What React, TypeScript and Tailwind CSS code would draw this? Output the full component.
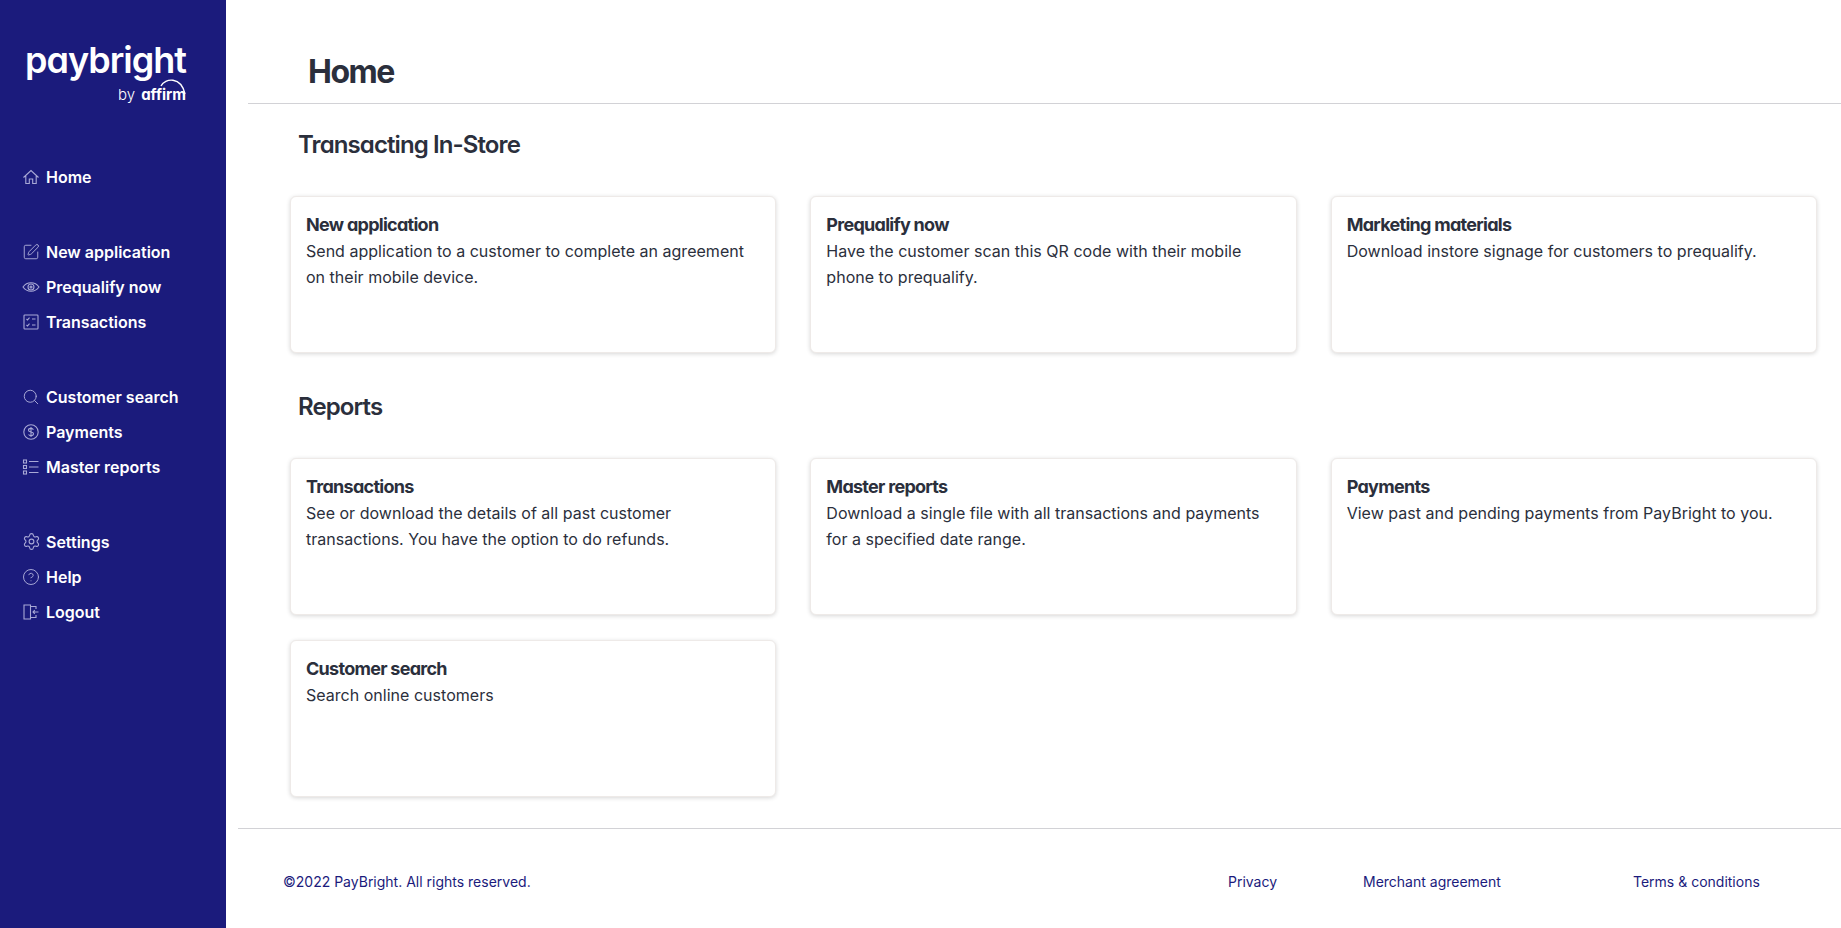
import { CircleHelp, Search, Settings, SquarePen } from "lucide-react";
import type { ReactNode } from "react";

const HomeIcon = () => (
  <svg width="18" height="18" viewBox="0 0 18 18" fill="none" stroke="currentColor" strokeWidth="1.1">
    <path d="M1.500 9.500L9 2.500l7.500 7M3.800 8v7.500h3.500v-4.500h3.400v4.500h3.500V8" />
  </svg>
);

const EyeIcon = () => (
  <svg width="18" height="18" viewBox="0 0 18 18" fill="none" stroke="currentColor" strokeWidth="1.1">
    <path d="M1 9c2-2.800 5-4.200 8-4.200s6 1.400 8 4.200c-2 2.800-5 4.200-8 4.200S3 11.800 1 9z" />
    <circle cx="9" cy="9" r="3" />
    <circle cx="9" cy="9" r="1" />
  </svg>
);

const DollarIcon = () => (
  <svg width="18" height="18" viewBox="0 0 18 18" fill="none" stroke="currentColor" strokeWidth="1.1">
    <circle cx="9" cy="9" r="7.200" />
    <path d="M11.400 6.700c-.4-.9-1.300-1.300-2.400-1.300-1.400 0-2.500.7-2.500 1.800s1.100 1.600 2.500 1.800 2.500.7 2.500 1.800-1.100 1.900-2.500 1.900c-1.100 0-2-.4-2.400-1.300M9 4v10" />
  </svg>
);

const ChecksBox = () => (
  <svg width="18" height="18" viewBox="0 0 18 18" fill="none" stroke="currentColor" strokeWidth="1.1">
    <rect x="2" y="2" width="14" height="14" rx="0.8" />
    <path d="M4.500 6l1 1 2-2.300M4.500 12l1 1 2-2.300M10 6h3.500M10 12h3.500" />
  </svg>
);

const ListBoxes = () => (
  <svg width="18" height="18" viewBox="0 0 18 18" fill="none" stroke="currentColor" strokeWidth="1.1">
    <rect x="1.500" y="2" width="3" height="3" />
    <rect x="1.500" y="7.500" width="3" height="3" />
    <rect x="1.500" y="13" width="3" height="3" />
    <path d="M7 3.500h9.500M7 9h9.500M7 14.500h9.500" />
  </svg>
);

const DoorOut = () => (
  <svg width="18" height="18" viewBox="0 0 18 18" fill="none" stroke="currentColor" strokeWidth="1.1">
    <path d="M8.500 2H2v14h6.500V2zM8.500 3.500H14V6M8.500 14.500H14V12" />
    <path d="M16.500 9h-5.500M12.800 7.200L11 9l1.800 1.800" />
  </svg>
);

const navGroups: { icon: ReactNode; label: string }[][] = [
  [{ icon: <HomeIcon />, label: "Home" }],
  [
    { icon: <SquarePen size={18} strokeWidth={1.3} />, label: "New application" },
    { icon: <EyeIcon />, label: "Prequalify now" },
    { icon: <ChecksBox />, label: "Transactions" },
  ],
  [
    { icon: <Search size={18} strokeWidth={1.3} />, label: "Customer search" },
    { icon: <DollarIcon />, label: "Payments" },
    { icon: <ListBoxes />, label: "Master reports" },
  ],
  [
    { icon: <Settings size={19} strokeWidth={1.4} />, label: "Settings" },
    { icon: <CircleHelp size={18} strokeWidth={1.3} />, label: "Help" },
    { icon: <DoorOut />, label: "Logout" },
  ],
];

const Card = ({ title, text }: { title: string; text: string }) => (
  <div className="h-[157px] rounded-md border border-[#eeeae8] bg-white px-[15px] pt-[16px] shadow-[0_1px_4px_rgba(0,0,0,0.16)]">
    <h3 className="mb-[1px] text-[18px] leading-[24px] font-bold tracking-[-0.72px] text-[#2b2f3c] [font-feature-settings:'cv11']">{title}</h3>
    <p className="text-[16px] leading-[26px] tracking-[0.02px] text-[#2b2f3c]">{text}</p>
  </div>
);

export default function App() {
  return (
    <div className="flex h-[928px] overflow-hidden bg-white font-['Inter',sans-serif]">
      <aside className="w-[226px] shrink-0 bg-[#1b1b7c] text-white">
        <div className="flex flex-col items-end pt-[37px] pr-[40px]">
          <div className="text-[36px] leading-[46px] font-semibold tracking-[-1px] [font-feature-settings:'cv11']">paybright</div>
          <div className="mt-[2px] flex items-end gap-[6px] text-[15px] leading-[20px]">
            <span className="font-light">by</span>
            <span className="relative font-bold [font-feature-settings:'cv11']">
              affirm
              <svg className="absolute -top-[8px] right-0" width="26" height="20" viewBox="0 0 26 20" fill="none" stroke="white" strokeWidth="1.4">
                <path d="M1 9C5 1 21 -1 25 17" />
              </svg>
            </span>
          </div>
        </div>
        <nav className="mt-[54px] flex flex-col gap-[40px] pl-[22px]">
          {navGroups.map((group) => (
            <ul key={group[0].label}>
              {group.map((item) => (
                <li key={item.label} className="flex h-[35px] items-center">
                  <span className="flex w-[24px] text-[#a9a9d6]">{item.icon}</span>
                  <span className="text-[16px] font-semibold">{item.label}</span>
                </li>
              ))}
            </ul>
          ))}
        </nav>
      </aside>
      <div className="flex min-w-0 flex-1 flex-col">
        <main className="flex-1 pr-[24px]">
          <div className="ml-[22px] -mr-[24px] h-[104px] border-b border-[#d2d2d6] pt-[50px] pl-[60px]">
            <h1 className="text-[32px] leading-[44px] font-bold tracking-[-1.5px] text-[#2b2f3c] [font-feature-settings:'cv11']">Home</h1>
          </div>
          <div className="pl-[64px]">
            <div className="flex h-[92px] items-start pt-[25px] pl-[8px]">
              <h2 className="text-[24px] leading-[32px] font-semibold tracking-[-0.9px] text-[#2b2f3c] [font-feature-settings:'cv11']">Transacting In-Store</h2>
            </div>
            <div className="grid grid-cols-3 gap-x-[34px]">
              <Card title="New application" text="Send application to a customer to complete an agreement on their mobile device." />
              <Card title="Prequalify now" text="Have the customer scan this QR code with their mobile phone to prequalify." />
              <Card title="Marketing materials" text="Download instore signage for customers to prequalify." />
            </div>
            <div className="flex h-[105px] items-start pt-[38px] pl-[8px]">
              <h2 className="text-[24px] leading-[32px] font-semibold tracking-[-0.9px] text-[#2b2f3c] [font-feature-settings:'cv11']">Reports</h2>
            </div>
            <div className="grid grid-cols-3 gap-x-[34px] gap-y-[25px]">
              <Card title="Transactions" text="See or download the details of all past customer transactions. You have the option to do refunds." />
              <Card title="Master reports" text="Download a single file with all transactions and payments for a specified date range." />
              <Card title="Payments" text="View past and pending payments from PayBright to you." />
              <Card title="Customer search" text="Search online customers" />
            </div>
          </div>
        </main>
        <footer className="ml-[12px] flex h-[100px] items-center border-t border-[#d2d2d6] pt-[6px] pl-[45px] text-[14px] text-[#1b1b7c]">
          <span className="w-[945px]">©2022 PayBright. All rights reserved.</span>
          <a className="w-[135px]">Privacy</a>
          <a className="w-[270px]">Merchant agreement</a>
          <a>Terms &amp; conditions</a>
        </footer>
      </div>
    </div>
  );
}
